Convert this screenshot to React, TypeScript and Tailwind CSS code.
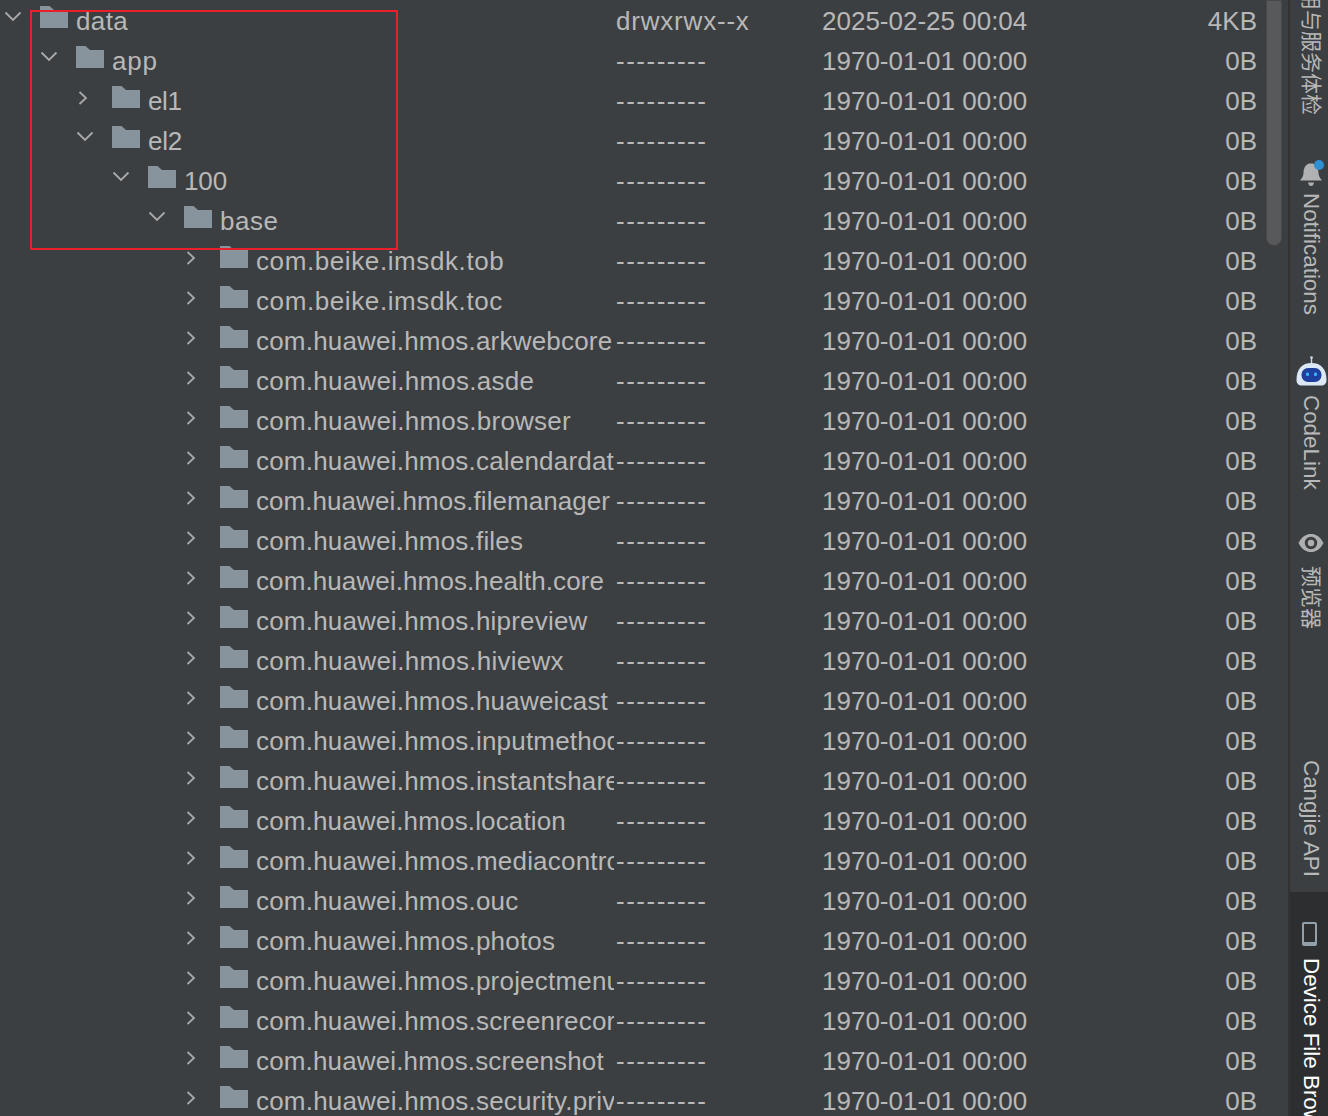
const FONT = "font-['Liberation_Sans',_'Noto_Sans_CJK_SC',_sans-serif]";

interface Row {
  name: string;
  depth: number;
  open?: boolean;
  perms?: string;
  date?: string;
  size?: string;
  tracking?: string;
}

const packages = [
  { name: 'com.beike.imsdk.tob', tracking: 'tracking-[0.6px]' },
  { name: 'com.beike.imsdk.toc', tracking: 'tracking-[0.6px]' },
  { name: 'com.huawei.hmos.arkwebcore' },
  { name: 'com.huawei.hmos.asde', tracking: 'tracking-[0.25px]' },
  { name: 'com.huawei.hmos.browser', tracking: 'tracking-[0.25px]' },
  { name: 'com.huawei.hmos.calendardata' },
  { name: 'com.huawei.hmos.filemanager', tracking: 'tracking-[0.05px]' },
  { name: 'com.huawei.hmos.files' },
  { name: 'com.huawei.hmos.health.core', tracking: 'tracking-[0.1px]' },
  { name: 'com.huawei.hmos.hipreview' },
  { name: 'com.huawei.hmos.hiviewx', tracking: 'tracking-[0.25px]' },
  { name: 'com.huawei.hmos.huaweicast' },
  { name: 'com.huawei.hmos.inputmethod' },
  { name: 'com.huawei.hmos.instantshare' },
  { name: 'com.huawei.hmos.location', tracking: 'tracking-[0.15px]' },
  { name: 'com.huawei.hmos.mediacontroller' },
  { name: 'com.huawei.hmos.ouc' },
  { name: 'com.huawei.hmos.photos' },
  { name: 'com.huawei.hmos.projectmenu' },
  { name: 'com.huawei.hmos.screenrecorder' },
  { name: 'com.huawei.hmos.screenshot', tracking: 'tracking-[0.15px]' },
  { name: 'com.huawei.hmos.security.privacycenter' },
];

const rows: Row[] = [
  { name: 'data', depth: 0, open: true, perms: 'drwxrwx--x', date: '2025-02-25 00:04', size: '4KB', tracking: 'tracking-[0.4px]' },
  { name: 'app', depth: 1, open: true, tracking: 'tracking-[0.8px]' },
  { name: 'el1', depth: 2, tracking: 'tracking-[-0.4px]' },
  { name: 'el2', depth: 2, open: true, tracking: 'tracking-[-0.3px]' },
  { name: '100', depth: 3, open: true, tracking: 'tracking-[-0.1px]' },
  { name: 'base', depth: 4, open: true, tracking: 'tracking-[0.5px]' },
  ...packages.map((pkg) => ({ ...pkg, depth: 5 })),
];

const Chevron = ({ open }: { open?: boolean }) => (
  <svg width="24" height="24" viewBox="0 0 24 24" fill="none" stroke="#a8a9aa" strokeWidth="1.8">
    {open ? <path d="M4.5 8.5 L12 16 L19.5 8.5" /> : <path d="M6.5 8 L13 14 L6.5 20" />}
  </svg>
);

const Folder = () => (
  <svg width="28" height="22" viewBox="0 0 28 22" fill="#87949d">
    <path d="M0 0 H9.5 L14 4 H28 V22 H0 Z" />
  </svg>
);

const TreeRow = ({ row }: { row: Row }) => (
  <div className="flex h-10 shrink-0 items-center">
    <div className="relative flex h-10 w-[614px] shrink-0 overflow-hidden" style={{ paddingLeft: row.depth * 36 }}>
      <div className="flex h-10 w-10 shrink-0 justify-start pl-px pt-[3px]">
        <Chevron open={row.open} />
      </div>
      <div className="w-7 shrink-0 pt-[5px]">
        <Folder />
      </div>
      <span className={`ml-2 whitespace-nowrap text-[26px] leading-10 ${row.tracking ?? 'tracking-[0.2px]'}`}>
        {row.name}
      </span>
    </div>
    <div className={`ml-[2px] w-[206px] shrink-0 text-[26px] leading-10 ${row.perms ? 'tracking-[0.8px]' : 'tracking-[1.5px]'}`}>
      {row.perms ?? '---------'}
    </div>
    <div className="w-[204px] shrink-0 whitespace-nowrap text-[26px] leading-10">{row.date ?? '1970-01-01 00:00'}</div>
    <div className="w-[231px] shrink-0 text-right text-[26px] leading-10">{row.size ?? '0B'}</div>
  </div>
);

const sideText = 'text-[22.4px] leading-6 whitespace-nowrap [writing-mode:vertical-rl] [text-orientation:sideways]';
const sideCjk = 'text-[21px] leading-6 whitespace-nowrap [writing-mode:vertical-rl] [text-orientation:sideways]';

export default function App() {
  return (
    <div className={`${FONT} flex h-[1116px] w-[1328px] overflow-hidden bg-[#3c3f41] text-[#b8b8b8]`}>
      <div className="relative w-[1288px] shrink-0 overflow-hidden">
        <div className="flex flex-col pt-px">
          {rows.map((row) => (
            <TreeRow key={row.name} row={row} />
          ))}
        </div>
        <div className="absolute left-[30px] top-[10px] h-[240px] w-[368px] border-2 border-[#e8202c]" />
        <div className="absolute left-[1266px] top-0 h-[246px] w-4 rounded-b-lg border border-[#47484a] bg-[#58595b]" />
      </div>
      <div className="flex h-full w-10 shrink-0 flex-col border-l-2 border-[#323232]">
        <div className="flex h-[892px] shrink-0 flex-col items-center pl-[4px]">
          <span className={`${sideCjk} -mt-[32px]`}>应用与服务体检</span>
          <svg className="mt-[45px]" width="28" height="28" viewBox="0 0 28 28">
            <path d="M12 3.5 C8 5 6.5 9 6.5 13 C6.5 16 5 18 3 20.5 H25 C23 18 21.5 16 21.5 13 C21.5 9 19 5 16 3.5 Z" fill="#b0b1b2" />
            <path d="M11 22.5 H17 C16.5 25 15.5 26 14 26 C12.5 26 11.5 25 11 22.5 Z" fill="#b0b1b2" />
            <circle cx="22" cy="5" r="5" fill="#2f8fd0" />
          </svg>
          <span className={`${sideText} mt-[5px]`}>Notifications</span>
          <svg className="mt-[41px]" width="31" height="30" viewBox="0 0 31 30">
            <circle cx="15.5" cy="1.6" r="1.4" fill="#c9d6e4" />
            <rect x="14.8" y="2" width="1.4" height="6" fill="#c9d6e4" />
            <path d="M0.5 24 C0.5 13 6 7 15.5 7 C25 7 30.5 13 30.5 24 C30.5 27.5 28.5 29.5 25 29.5 H6 C2.5 29.5 0.5 27.5 0.5 24 Z" fill="#dce8f5" />
            <rect x="5.5" y="12" width="20" height="14" rx="6.5" fill="#1f3f9e" />
            <rect x="10" y="16.5" width="3" height="3.6" rx="1.4" fill="#35b8f8" />
            <rect x="18" y="16.5" width="3" height="3.6" rx="1.4" fill="#35b8f8" />
          </svg>
          <span className={`${sideText} mt-[9px]`}>CodeLink</span>
          <svg className="mt-[43px]" width="26" height="20" viewBox="0 0 26 20">
            <path
              fillRule="evenodd"
              d="M0.5 10 C4 3.5 8 1 13 1 C18 1 22 3.5 25.5 10 C22 16.5 18 19 13 19 C8 19 4 16.5 0.5 10 Z M13 3.8 A6.2 6.2 0 1 0 13 16.2 A6.2 6.2 0 1 0 13 3.8 Z M13 6.8 A3.2 3.2 0 1 1 13 13.2 A3.2 3.2 0 1 1 13 6.8 Z"
              fill="#aeafb0"
            />
          </svg>
          <span className={`${sideCjk} mt-[13px]`}>预览器</span>
          <span className={`${sideText} mt-[131px]`}>Cangjie API</span>
        </div>
        <div className="flex flex-1 flex-col items-center bg-[#2d2e30] pl-[4px] text-[#ffffff]">
          <div className="-ml-[4px] mt-[30px] h-6 w-[15px] rounded-[2px] border-2 border-b-4 border-[#93a0aa]" />
          <span className={`${sideText} mt-3`}>Device File Browser</span>
        </div>
      </div>
    </div>
  );
}
